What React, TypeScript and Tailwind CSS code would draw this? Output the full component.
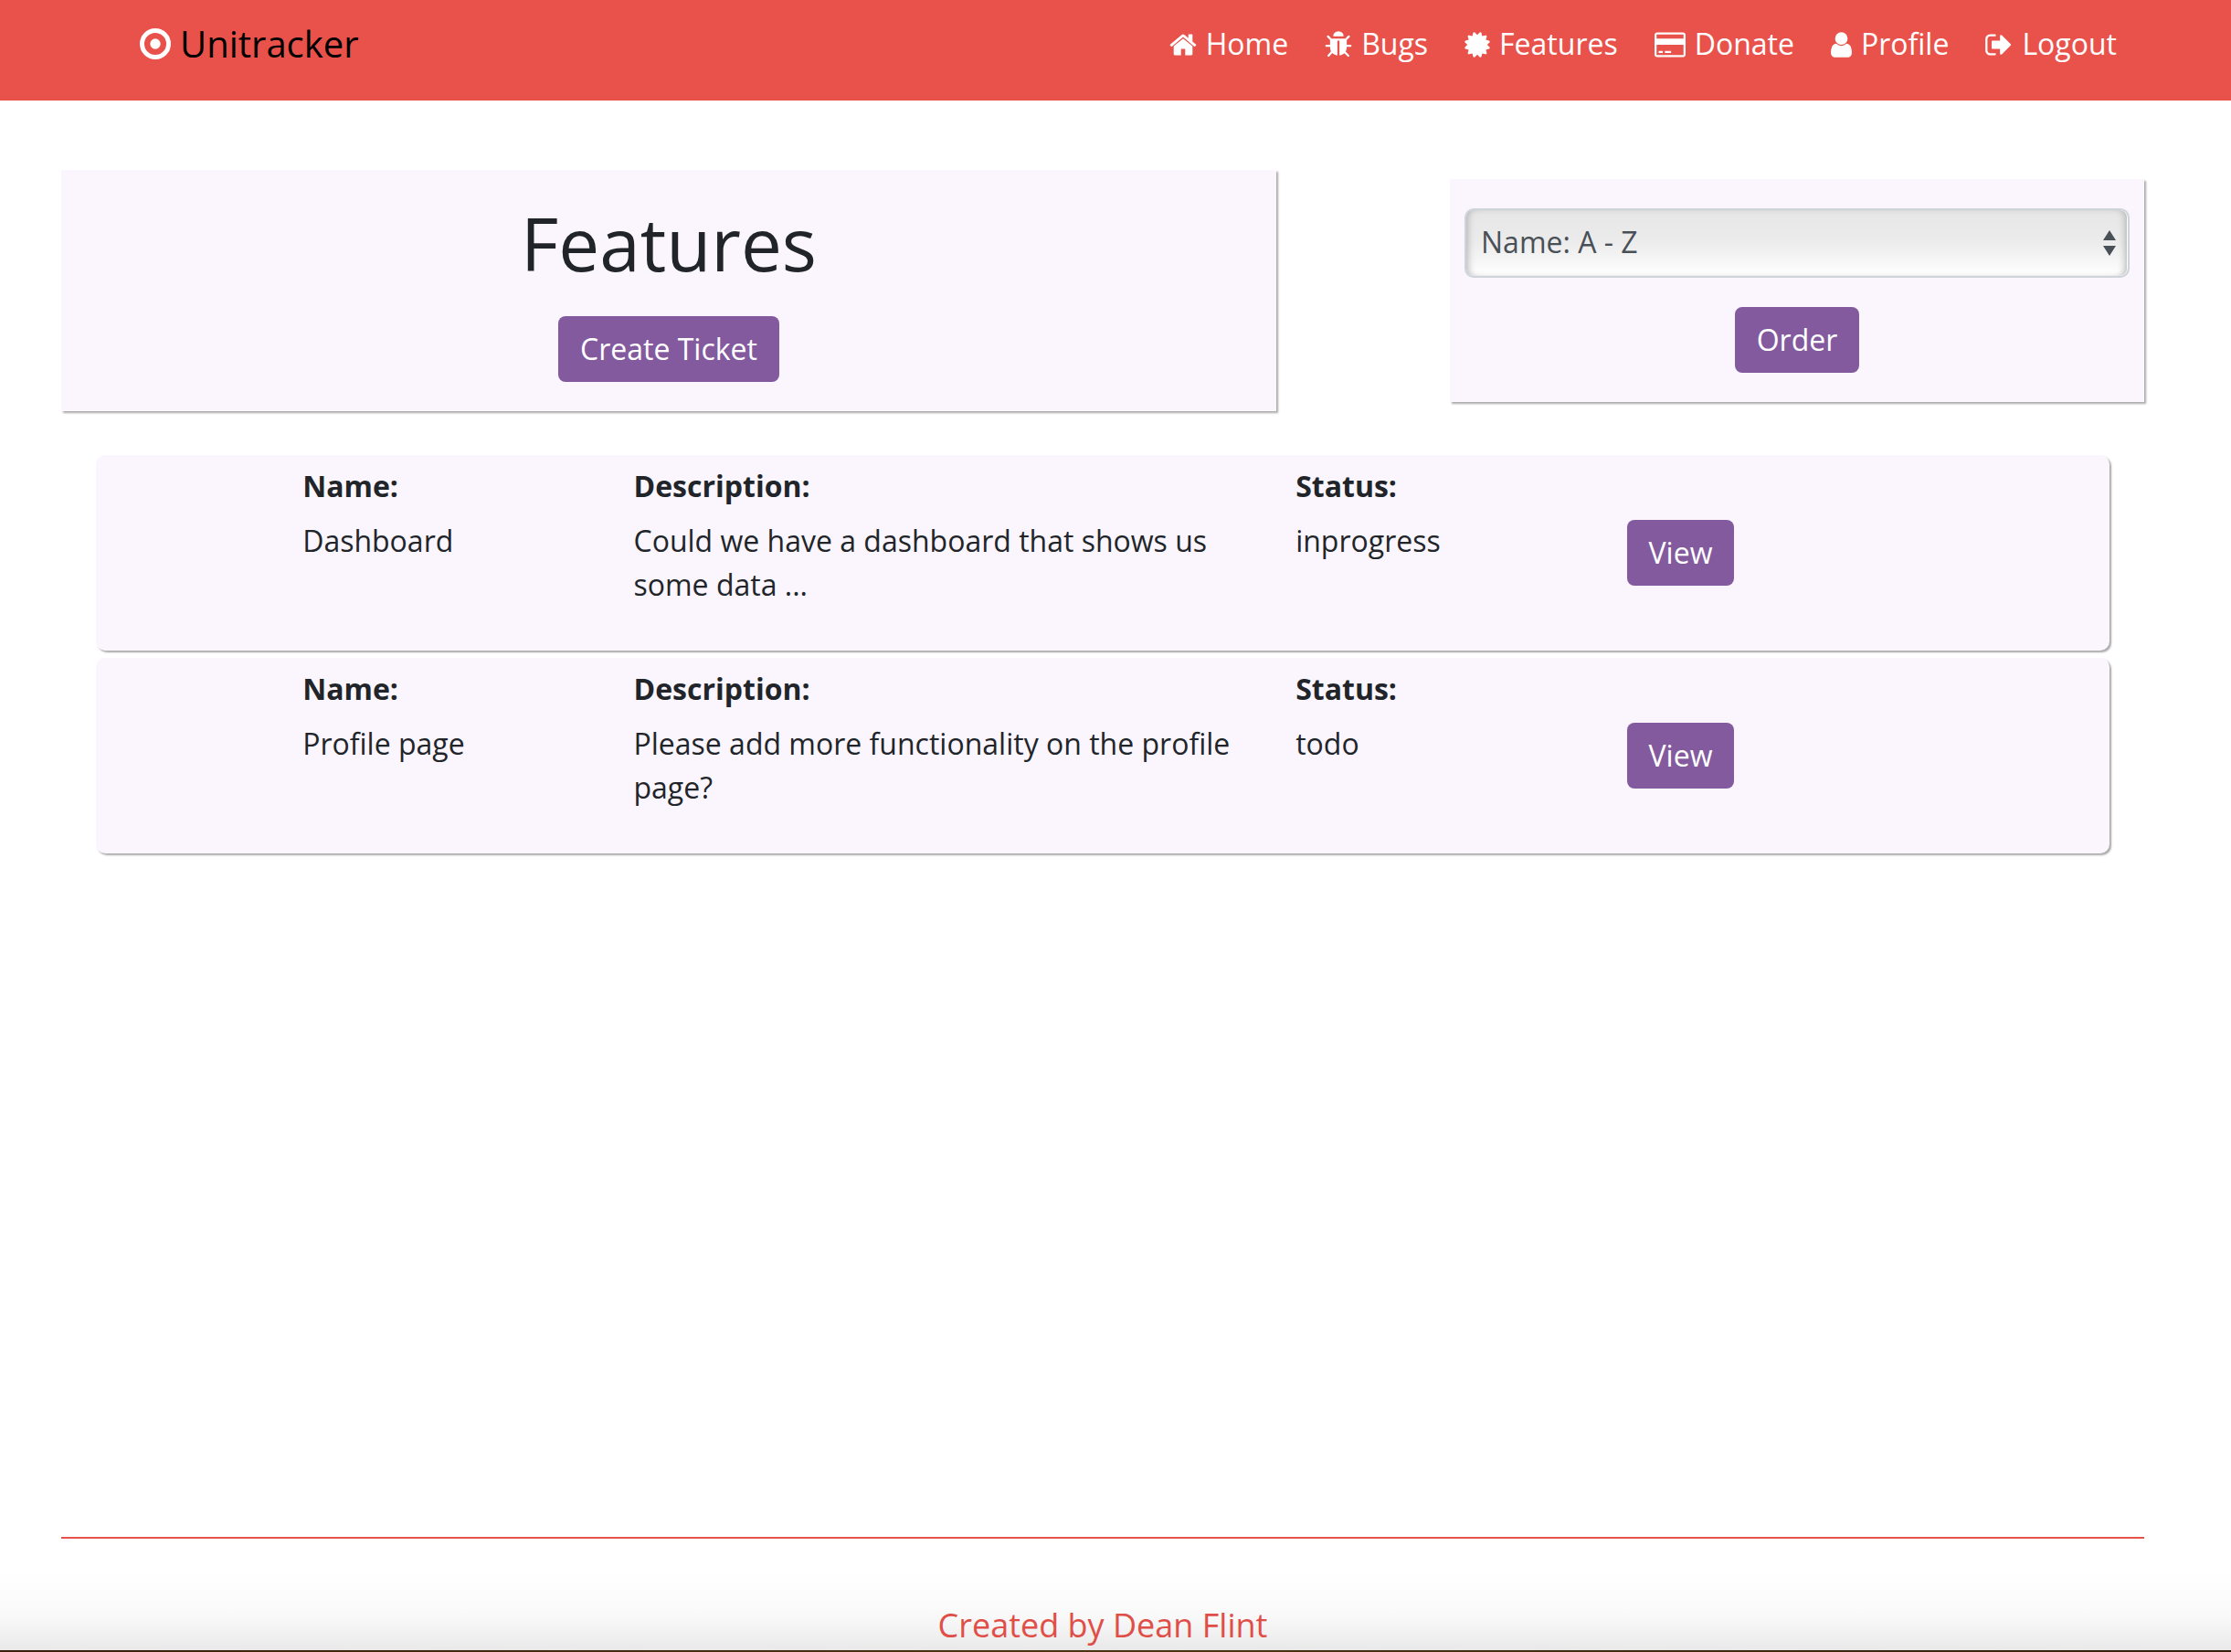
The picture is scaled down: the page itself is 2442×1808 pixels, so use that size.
import type { ReactNode } from "react";

type Glyph = { viewBox: string; width: string; path: string };

const glyphs: Record<string, Glyph> = {
  home: {
    viewBox: "64 -56 1664 1792",
    width: "w-[30px]",
    path: "M1472 992v480q0 26-19 45t-45 19h-384v-384h-256v384h-384q-26 0-45-19t-19-45v-480q0-1 .5-3t.5-3l575-474 575 474q1 2 1 6zm223-69l-62 74q-8 9-21 11h-3q-13 0-21-7l-692-577-692 577q-12 8-24 7-13-2-21-11l-62-74q-8-10-7-23.5t11-21.5l719-599q32-26 76-26t76 26l244 204v-195q0-14 9-23t23-9h192q14 0 23 9t9 23v408l219 182q10 8 11 21.5t-7 23.5z",
  },
  bug: {
    viewBox: "64 -56 1664 1792",
    width: "w-[30px]",
    path: "M1696 960q0 26-19 45t-45 19h-224q0 171-67 290l208 209q19 19 19 45t-19 45q-18 19-45 19t-45-19l-198-197q-5 5-15 13t-42 28.5-65 36.5-82 29-97 13v-896h-128v896q-51 0-101.5-13.5t-87-33-66-39-43.5-32.5l-15-14-183 207q-20 21-48 21-24 0-43-16-19-18-20.5-44.5t15.5-46.5l202-227q-58-114-58-274h-224q-26 0-45-19t-19-45 19-45 45-19h224v-294l-173-173q-19-19-19-45t19-45 45-19 45 19l173 173h844l173-173q19-19 45-19t45 19 19 45-19 45l-173 173v294h224q26 0 45 19t19 45zm-480-576h-640q0-133 93.5-226.5t226.5-93.5 226.5 93.5 93.5 226.5z",
  },
  certificate: {
    viewBox: "128 -56 1536 1792",
    width: "w-7",
    path: "M1504 896l138 135q30 28 20 70-12 41-52 51l-188 48 53 186q12 41-19 70-29 31-70 19l-186-53-48 188q-10 40-51 52-12 2-19 2-31 0-51-22l-135-138-135 138q-28 30-70 20-41-11-51-52l-48-188-186 53q-41 12-70-19-31-29-19-70l53-186-188-48q-40-10-52-51-10-42 20-70l138-135-138-135q-30-28-20-70 12-41 52-51l188-48-53-186q-12-41 19-70 29-31 70-19l186 53 48-188q10-41 51-51 41-12 70 19l135 139 135-139q29-30 70-19 41 10 51 51l48 188 186-53q41-12 70 19 31 29 19 70l-53 186 188 48q40 10 52 51 10 42-20 70z",
  },
  card: {
    viewBox: "0 -56 1920 1792",
    width: "w-[34px]",
    path: "M1760 128q66 0 113 47t47 113v1216q0 66-47 113t-113 47h-1600q-66 0-113-47t-47-113v-1216q0-66 47-113t113-47h1600zm-1600 128q-13 0-22.5 9.5t-9.5 22.5v224h1664v-224q0-13-9.5-22.5t-22.5-9.5h-1600zm1600 1280q13 0 22.5-9.5t9.5-22.5v-608h-1664v608q0 13 9.5 22.5t22.5 9.5h1600zm-1504-128v-128h256v128h-256zm384 0v-128h384v128h-384z",
  },
  user: {
    viewBox: "256 -56 1280 1792",
    width: "w-[23px]",
    path: "M1536 1399q0 109-62.5 187t-150.5 78h-854q-88 0-150.5-78t-62.5-187q0-85 8.5-160.5t31.5-152 58.5-131 94-89 134.5-34.5q131 128 313 128t313-128q76 0 134.5 34.5t94 89 58.5 131 31.5 152 8.5 160.5zm-256-887q0 159-112.5 271.5t-271.5 112.5-271.5-112.5-112.5-271.5 112.5-271.5 271.5-112.5 271.5 112.5 112.5 271.5z",
  },
  signOut: {
    viewBox: "64 -56 1664 1792",
    width: "w-[30px]",
    path: "M704 1440q0 4 1 20t.5 26.5-3 23.5-10 19.5-20.5 6.5h-320q-119 0-203.5-84.5t-84.5-203.5v-704q0-119 84.5-203.5t203.5-84.5h320q13 0 22.5 9.5t9.5 22.5q0 4 1 20t.5 26.5-3 23.5-10 19.5-20.5 6.5h-320q-66 0-113 47t-47 113v704q0 66 47 113t113 47h312l11.5 1 11.5 3 8 5.5 7 9 2 13.5zm928-544q0 26-19 45l-544 544q-19 19-45 19t-45-19-19-45v-288h-448q-26 0-45-19t-19-45v-384q0-26 19-45t45-19h448v-288q0-26 19-45t45-19 45 19l544 544q19 19 19 45z",
  },
};

const navItems = [
  { label: "Home", icon: glyphs.home },
  { label: "Bugs", icon: glyphs.bug },
  { label: "Features", icon: glyphs.certificate },
  { label: "Donate", icon: glyphs.card },
  { label: "Profile", icon: glyphs.user },
  { label: "Logout", icon: glyphs.signOut },
];

const tickets = [
  {
    name: "Dashboard",
    description: "Could we have a dashboard that shows us some data ...",
    status: "inprogress",
  },
  {
    name: "Profile page",
    description: "Please add more functionality on the profile page?",
    status: "todo",
  },
];

function Icon({ glyph }: { glyph: Glyph }) {
  return (
    <svg viewBox={glyph.viewBox} className={`h-8 shrink-0 fill-current ${glyph.width}`} aria-hidden="true">
      <path d={glyph.path} />
    </svg>
  );
}

function Button({ children }: { children: ReactNode }) {
  return (
    <button type="button" className="cursor-pointer rounded-lg bg-[#845a9f] px-6 py-3 text-white">
      {children}
    </button>
  );
}

function Field({ label, value, className }: { label: string; value: string; className: string }) {
  return (
    <div className={`px-[30px] ${className}`}>
      <dt className="mb-3 font-bold">{label}</dt>
      <dd>{value}</dd>
    </div>
  );
}

function Header() {
  return (
    <header className="bg-[#e9524b] pr-7">
      <div className="mx-auto flex min-h-[110px] w-full max-w-[2280px] items-start justify-between pt-[18px] pr-[30px] pl-[86px]">
        <a href="#" className="flex items-center gap-[10px] text-[40px] leading-[60px] text-black">
          <svg viewBox="0 0 1536 1536" className="size-[34px]" aria-hidden="true">
            <circle cx="768" cy="768" r="656" fill="none" stroke="white" strokeWidth="224" />
            <circle cx="768" cy="768" r="256" fill="white" />
          </svg>
          Unitracker
        </a>
        <nav className="flex flex-wrap gap-10 pt-[6px] text-white">
          {navItems.map((item) => (
            <a key={item.label} href="#" className="flex items-center gap-[10px]">
              <Icon glyph={item.icon} />
              {item.label}
            </a>
          ))}
        </nav>
      </div>
    </header>
  );
}

export default function App() {
  return (
    <div className="flex min-h-screen flex-col bg-white font-['Open_Sans',sans-serif] text-[32px] leading-[48px] text-[#212529]">
      <Header />

      <main className="grow pr-7">
        <div className="mx-auto w-full max-w-[2280px] pt-[76px]">
          <div className="grid grid-cols-12 items-center">
            <section className="col-span-7 flex flex-col items-center gap-8 bg-[#fbf6fe] py-8 shadow-[2px_2px_2px_#aaa]">
              <h1 className="text-[80px] leading-[96px]">Features</h1>
              <Button>Create Ticket</Button>
            </section>

            <form className="col-span-4 col-start-9 flex flex-col items-center gap-8 bg-[#fbf6fe] px-4 py-8 shadow-[2px_2px_2px_#aaa]">
              <div className="relative w-full">
                <select
                  aria-label="Order tickets by"
                  className="h-[76px] w-full appearance-none rounded-[10px] border-2 border-[#ced4da] bg-linear-to-b from-[#e6e6e6] via-[#ececec] to-white px-4 pb-[2px] text-[#495057] shadow-[inset_6px_0_8px_-5px_#aaa,inset_-1px_0_0_white,inset_-7px_0_8px_-5px_#aaa]"
                >
                  <option>Name: A - Z</option>
                  <option>Name: Z - A</option>
                </select>
                <svg
                  viewBox="0 0 14 28"
                  className="pointer-events-none absolute top-6 right-[15px] h-7 w-[14px] fill-[#495057]"
                  aria-hidden="true"
                >
                  <path d="M7 0l7 11H0zM0 17h14l-7 11z" />
                </svg>
              </div>
              <Button>Order</Button>
            </form>
          </div>

          <ul className="mx-[38px] mt-12 flex flex-col gap-2">
            {tickets.map((ticket) => (
              <li
                key={ticket.name}
                className="grid grid-cols-12 rounded-[10px] bg-[#fbf6fe] px-[15px] pt-[10px] pb-12 shadow-[2px_2px_2px_#aaa]"
              >
                <dl className="col-span-8 col-start-2 grid grid-cols-8">
                  <Field label="Name:" value={ticket.name} className="col-span-2" />
                  <Field label="Description:" value={ticket.description} className="col-span-4" />
                  <Field label="Status:" value={ticket.status} className="col-span-2" />
                </dl>
                <div className="col-span-2 px-[30px] pt-[61px]">
                  <Button>View</Button>
                </div>
              </li>
            ))}
          </ul>
        </div>
      </main>

      <footer className="bg-linear-to-b from-white from-30% via-[#f9f9f9] via-70% to-[#e9e9e9] pr-7">
        <div className="mx-auto w-full max-w-[2280px] border-t-2 border-[#e9524b] pt-[67px] text-center text-[36px] leading-[55px] text-[#e04e48]">
          <p>Created by Dean Flint</p>
        </div>
      </footer>
      <div className="h-[2px] bg-linear-to-r from-[#3a200c] via-[#4a3512] to-[#33200d]" />
    </div>
  );
}
